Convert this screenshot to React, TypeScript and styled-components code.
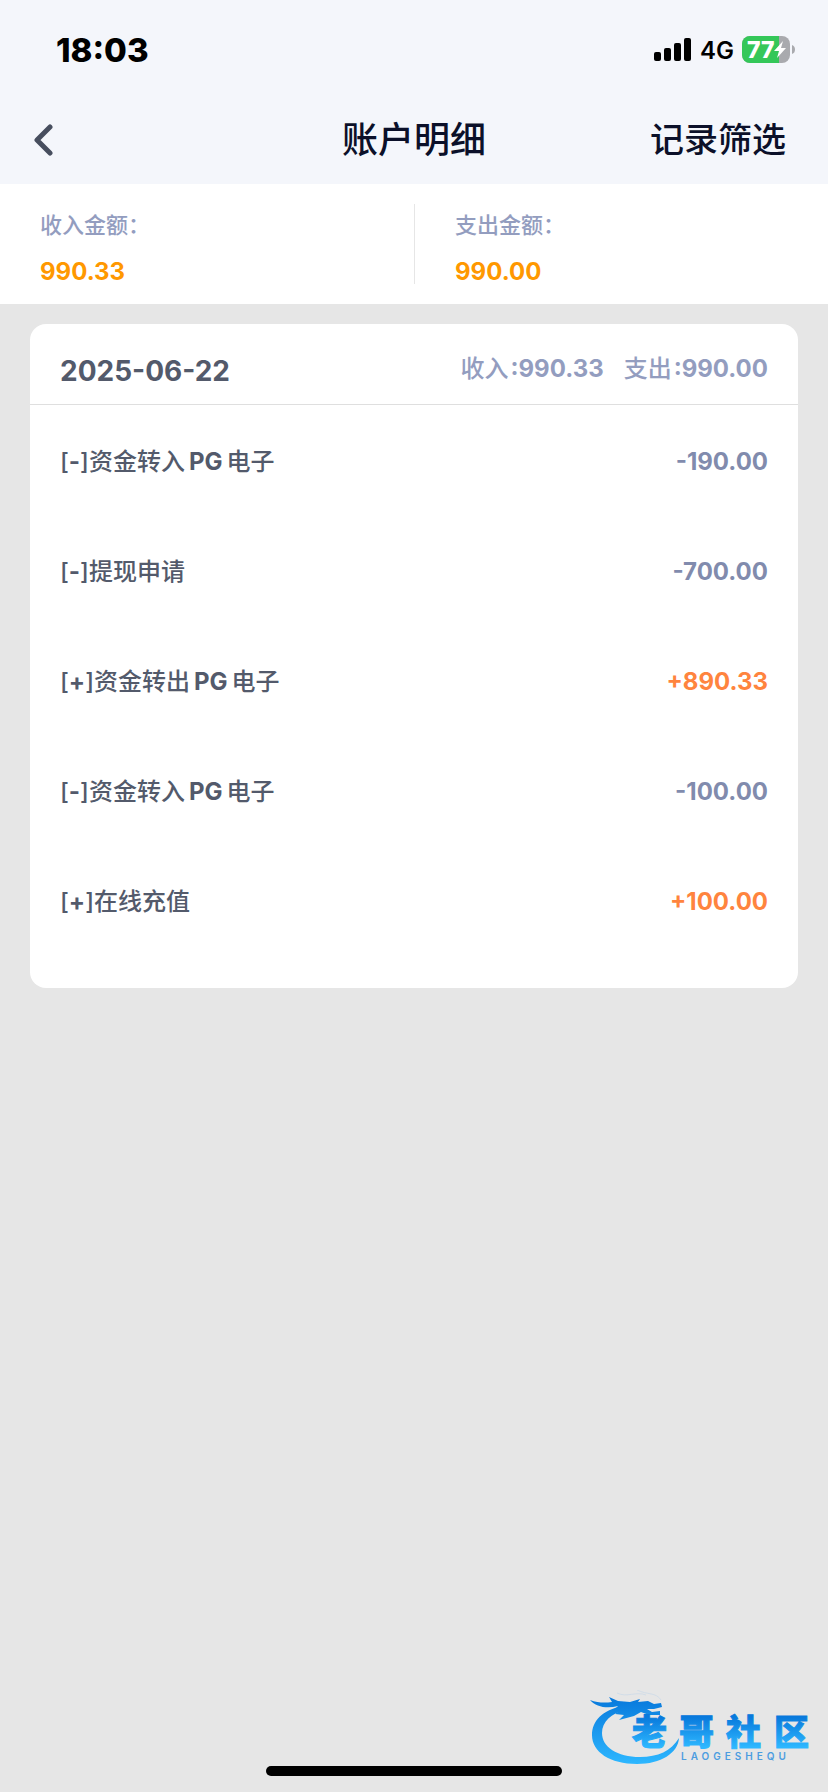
import React from "react";
import styled, { createGlobalStyle } from "styled-components";

const GlobalStyle = createGlobalStyle`
  *, *::before, *::after { box-sizing: border-box; }
  body {
    margin: 0;
    background: #e6e6e6;
    font-family: Inter, "Noto Sans CJK SC", sans-serif;
    font-weight: 500;
    color: #535a6b;
  }
`;

const Screen = styled.div`
  display: flex;
  flex-direction: column;
  min-height: 100vh;
`;

const TopArea = styled.header`
  background: #f4f6fb;
`;

const StatusBar = styled.div`
  display: flex;
  align-items: center;
  justify-content: space-between;
  height: 100px;
  padding: 0 32px 0 56px;
  color: #000;
`;

const Clock = styled.time`
  font-size: 33px;
  font-weight: 800;
`;

const StatusIcons = styled.div`
  display: flex;
  align-items: center;
  gap: 8px;
`;

const Network = styled.span`
  font-size: 24px;
  font-weight: 600;
`;

const NavBar = styled.nav`
  display: grid;
  grid-template-columns: 1fr auto 1fr;
  align-items: center;
  height: 84px;
  padding: 0 32px 4px;
  color: #0b1029;
`;

const BackButton = styled.button`
  display: flex;
  justify-self: start;
  padding: 0;
  border: 0;
  background: none;
  color: #474e5e;
`;

const Title = styled.h1`
  margin: 0;
  font-size: 36px;
  font-weight: 500;
  line-height: 48px;
`;

const FilterButton = styled.button`
  justify-self: end;
  padding: 0 10px 0 0;
  border: 0;
  background: none;
  color: inherit;
  font: inherit;
  font-size: 34px;
  line-height: 48px;
`;

const Summary = styled.dl`
  display: grid;
  grid-template-columns: 1fr 1fr;
  margin: 0;
  padding: 20px 0;
  background: #fff;
`;

const SummaryItem = styled.div`
  padding-left: 40px;
  & + & { border-left: 1px solid #e6e6e6; }
`;

const SummaryLabel = styled.dt`
  padding-top: 4px;
  margin-bottom: 18px;
  color: #939dbf;
  font-size: 22px;
  line-height: 34px;
`;

const SummaryValue = styled.dd`
  margin: 0;
  color: #ff9800;
  font-size: 24px;
  font-weight: 700;
  line-height: 24px;
`;

const Card = styled.section`
  margin: 20px 30px 0;
  padding-bottom: 31px;
  border-radius: 16px;
  background: #fff;
`;

const CardHeader = styled.div`
  display: flex;
  align-items: center;
  justify-content: space-between;
  height: 81px;
  padding: 10px 30px 0;
  border-bottom: 1px solid #dfdfdf;
`;

const DateHeading = styled.h2`
  margin: 0;
  padding-top: 4px;
  font-size: 28px;
  font-weight: 700;
`;

const DayTotals = styled.div`
  display: flex;
  gap: 20px;
  color: #939dbf;
  font-size: 24px;
  line-height: 36px;
`;

const Figure = styled.span`
  margin-left: 2px;
  font-weight: 700;
`;

const Entries = styled.ul`
  margin: 0;
  padding: 2px 0 0;
  list-style: none;
`;

const Entry = styled.li`
  display: flex;
  align-items: center;
  justify-content: space-between;
  height: 110px;
  padding: 0 30px;
  font-size: 24px;
  line-height: 36px;
`;

const Sign = styled.span`
  font-weight: 700;
`;

const Provider = styled.span`
  margin: 0 4px;
  font-weight: 700;
`;

const Amount = styled.span<{ $income: boolean }>`
  color: ${(p) => (p.$income ? "#ff843e" : "#818bad")};
  font-weight: 700;
`;

const Footer = styled.footer`
  display: flex;
  flex-direction: column;
  margin-top: auto;
  padding: 0 16px 16px;
`;

const Brand = styled.svg`
  align-self: flex-end;
  display: block;
`;

const HomeIndicator = styled.div`
  align-self: center;
  width: 296px;
  height: 10px;
  border-radius: 5px;
  background: #000;
`;

type EntryData = { label: string; provider?: string; suffix?: string; amount: string };

const entries: EntryData[] = [
  { label: "资金转入", provider: "PG", suffix: "电子", amount: "-190.00" },
  { label: "提现申请", amount: "-700.00" },
  { label: "资金转出", provider: "PG", suffix: "电子", amount: "+890.33" },
  { label: "资金转入", provider: "PG", suffix: "电子", amount: "-100.00" },
  { label: "在线充值", amount: "+100.00" },
];

const SignalIcon = () => (
  <svg width="38" height="24" viewBox="0 0 38 24" aria-hidden="true">
    <rect x="0" y="14" width="7" height="9" rx="2" />
    <rect x="10" y="10" width="7" height="13" rx="2" />
    <rect x="20" y="5" width="7" height="18" rx="2" />
    <rect x="30" y="0" width="7" height="23" rx="2" />
  </svg>
);

const BatteryIcon = () => (
  <svg width="54" height="28" viewBox="0 0 54 28" role="img" aria-label="77%">
    <defs>
      <clipPath id="battery-body">
        <rect width="48" height="27" rx="8" />
      </clipPath>
    </defs>
    <g clipPath="url(#battery-body)">
      <rect width="48" height="27" fill="#a9aaae" />
      <rect width="37" height="27" fill="#34c759" />
    </g>
    <path d="M50 9 Q53 10 53 13.500 Q53 17 50 18Z" fill="#a9aaae" />
    <text x="5" y="22" fill="#fff" fontSize="23" fontWeight="800">77</text>
    <path d="M41 5 L32 15 H37 L35 22 L44 12 H39 Z" fill="#fff" />
  </svg>
);

const BrandLogo = () => (
  <Brand width="224" height="76" viewBox="0 0 224 76" role="img" aria-label="老哥社区">
    <defs>
      <linearGradient id="brand-ring" x1="0" y1="8" x2="0" y2="74" gradientUnits="userSpaceOnUse">
        <stop offset="0" stopColor="#0879dc" />
        <stop offset="1" stopColor="#2db7ff" />
      </linearGradient>
      <linearGradient id="brand-name" x1="0" y1="27" x2="0" y2="57" gradientUnits="userSpaceOnUse">
        <stop offset="0" stopColor="#0879dc" />
        <stop offset="1" stopColor="#2db7ff" />
      </linearGradient>
    </defs>
    <path
      d="M35 16 C14 20 4 31 4 45 C4 62 22 74 49 74 C73 74 90 63 91 48 C83 61 70 67 52 67 C29 67 14 57 14 43 C14 32 23 23 38 20Z"
      fill="url(#brand-ring)"
    />
    <path
      d="M2 10 C10 13 17 13 24 12 L21 7 L30 11 L42 12 L52 9 L50 12 L60 11 L66 14 L73 13 L74 17 L66 19 L59 19 L64 22 L72 21 L72 25 L61 25 L53 22 L46 26 L31 30 L36 25 L27 24 L34 19 L26 20 L30 16 C19 19 8 17 2 10Z"
      fill="url(#brand-ring)"
    />
    <path d="M29 3 C39 8 48 1 58 5 M49 0 C59 5 68 2 73 10" fill="none" stroke="#d2dde8" strokeWidth="1" />
    <text x="44 91 138 186" y="55" fill="url(#brand-name)" stroke="url(#brand-name)" strokeWidth="1" fontSize="35" fontWeight="900">
      老哥社区
    </text>
    <text x="93" y="70" fill="#4c9de0" fontSize="10" fontWeight="600" letterSpacing="4">
      LAOGESHEQU
    </text>
  </Brand>
);

export default function App() {
  return (
    <Screen>
      <GlobalStyle />
      <TopArea>
        <StatusBar>
          <Clock>18:03</Clock>
          <StatusIcons>
            <SignalIcon />
            <Network>4G</Network>
            <BatteryIcon />
          </StatusIcons>
        </StatusBar>
        <NavBar>
          <BackButton type="button" aria-label="返回">
            <svg width="22" height="32" viewBox="0 0 22 32" fill="none" stroke="currentColor" strokeWidth="5" strokeLinecap="round" strokeLinejoin="round">
              <path d="M18 3 L5 16 L18 29" />
            </svg>
          </BackButton>
          <Title>账户明细</Title>
          <FilterButton type="button">记录筛选</FilterButton>
        </NavBar>
      </TopArea>
      <main>
        <Summary>
          <SummaryItem>
            <SummaryLabel>收入金额：</SummaryLabel>
            <SummaryValue>990.33</SummaryValue>
          </SummaryItem>
          <SummaryItem>
            <SummaryLabel>支出金额：</SummaryLabel>
            <SummaryValue>990.00</SummaryValue>
          </SummaryItem>
        </Summary>
        <Card>
          <CardHeader>
            <DateHeading>2025-06-22</DateHeading>
            <DayTotals>
              <span>收入<Figure>:990.33</Figure></span>
              <span>支出<Figure>:990.00</Figure></span>
            </DayTotals>
          </CardHeader>
          <Entries>
            {entries.map((entry, i) => {
              const income = entry.amount.startsWith("+");
              return (
                <Entry key={i}>
                  <span>
                    [<Sign>{income ? "+" : "-"}</Sign>]{entry.label}
                    {entry.provider && <Provider>{entry.provider}</Provider>}
                    {entry.suffix}
                  </span>
                  <Amount $income={income}>{entry.amount}</Amount>
                </Entry>
              );
            })}
          </Entries>
        </Card>
      </main>
      <Footer>
        <BrandLogo />
        <HomeIndicator />
      </Footer>
    </Screen>
  );
}
